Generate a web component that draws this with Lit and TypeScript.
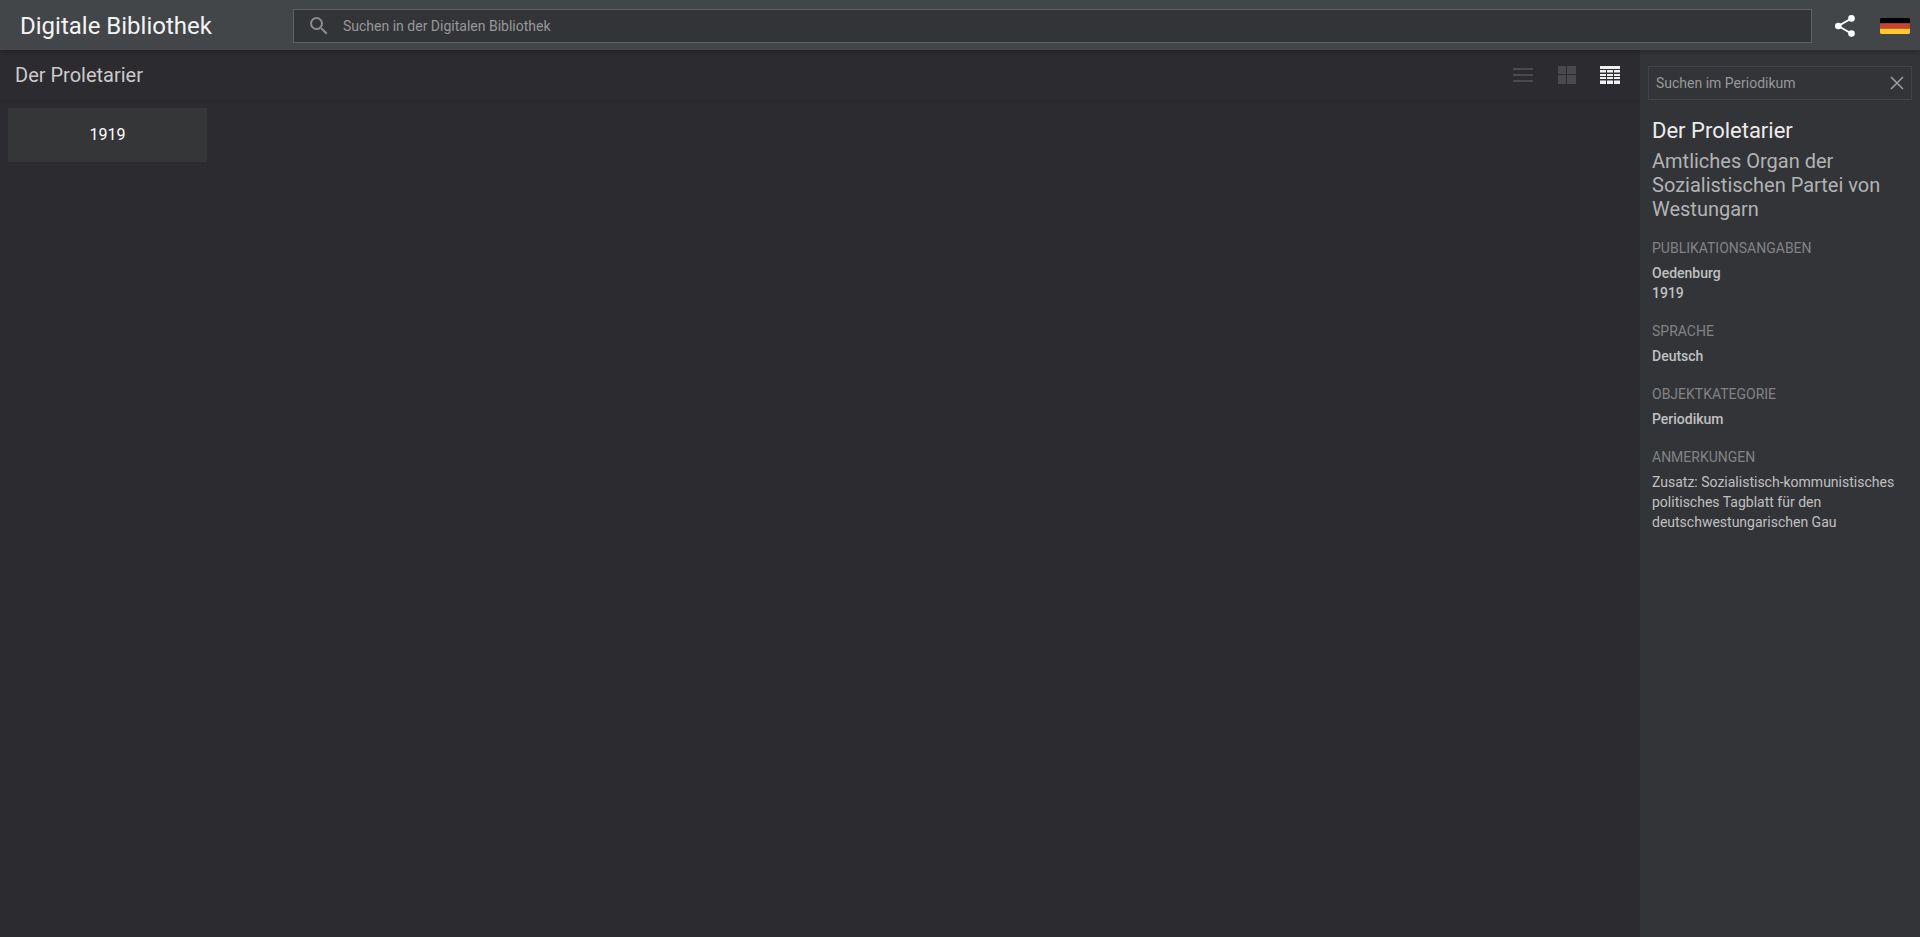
import { LitElement, html, css, svg } from "lit";
import { customElement, state } from "lit/decorators.js";

type View = "list" | "tiles" | "calendar";

interface Section {
  label: string;
  lines: string[];
  strong: boolean;
}

const SECTIONS: Section[] = [
  { label: "Publikationsangaben", lines: ["Oedenburg", "1919"], strong: true },
  { label: "Sprache", lines: ["Deutsch"], strong: true },
  { label: "Objektkategorie", lines: ["Periodikum"], strong: true },
  {
    label: "Anmerkungen",
    lines: ["Zusatz: Sozialistisch-kommunistisches politisches Tagblatt für den deutschwestungarischen Gau"],
    strong: false,
  },
];

const VIEWS: { id: View; title: string; icon: unknown }[] = [
  {
    id: "list",
    title: "Liste",
    icon: svg`<path d="M3 5h20v2H3zM3 11h20v2H3zM3 17h20v2H3z" />`,
  },
  {
    id: "tiles",
    title: "Kacheln",
    icon: svg`<path d="M4 3h8v8H4zM13 3h9v8h-9zM4 12h8v9H4zM13 12h9v9h-9z" />`,
  },
  {
    id: "calendar",
    title: "Kalender",
    icon: svg`<path d="M2 3h20v3H2z" />
      <path d="M2 7h6v2H2zM9 7h6v2H9zM16 7h6v2h-6zM2 11h6v2H2zM9 11h6v2H9zM16 11h6v2h-6zM2 14h6v2H2zM9 14h6v2H9zM16 14h6v2h-6zM2 18h6v3H2zM9 18h6v3H9zM16 18h6v3h-6z" />
      <path opacity=".55" d="M2 9h6v1H2zM9 9h6v1H9zM16 9h6v1h-6zM2 17h6v1H2zM9 17h6v1H9zM16 17h6v1h-6z" />`,
  },
];

@customElement("app-root")
export class AppRoot extends LitElement {
  @state() private view: View = "calendar";

  static styles = css`
    :host {
      display: flex;
      flex-direction: column;
      min-height: 100vh;
      background: #2c2b2f;
      color: #c0c0c1;
      font: 14px/20px Roboto, "Liberation Sans", sans-serif;
    }
    *,
    *::before {
      box-sizing: border-box;
    }
    h1,
    h2,
    h3,
    p {
      margin: 0;
      font-weight: 400;
    }
    a {
      color: inherit;
      text-decoration: none;
    }
    button {
      display: flex;
      align-items: center;
      justify-content: center;
      padding: 0;
      border: 0;
      background: none;
      color: inherit;
      font: inherit;
      cursor: pointer;
    }
    svg {
      display: block;
      fill: currentColor;
    }
    input {
      flex: 1;
      min-width: 0;
      height: 100%;
      padding: 0;
      border: 0;
      outline: 0;
      background: none;
      color: #e0e0e0;
      font: inherit;
    }
    input::placeholder {
      color: #97989a;
      opacity: 1;
    }
    .topbar {
      position: relative;
      z-index: 1;
      display: flex;
      align-items: center;
      height: 50px;
      padding: 2px 10px 0 20px;
      background: #434649;
      box-shadow: 0 1px 5px rgba(0, 0, 0, 0.3);
    }
    .brand {
      flex: 0 0 273px;
      color: #f4f4f4;
      font-size: 24px;
      line-height: 32px;
    }
    .field {
      display: flex;
      align-items: center;
      height: 34px;
      border: 1px solid #5f6163;
      background: #333438;
    }
    .field.global {
      flex: 1;
      gap: 12px;
      padding: 0 14px 0 13px;
    }
    .field.local {
      padding: 0 4px 0 7px;
      border-color: #42434a;
    }
    .magnifier {
      color: #8b8c8e;
    }
    .share {
      width: 24px;
      height: 34px;
      margin: 0 23px 0 21px;
      color: #fff;
    }
    .body {
      flex: 1;
      display: flex;
    }
    .main {
      flex: 1;
    }
    .toolbar {
      display: flex;
      align-items: center;
      justify-content: space-between;
      height: 50px;
      padding: 0 18px 0 15px;
      box-shadow: 0 1px 3px rgba(0, 0, 0, 0.15);
    }
    .heading {
      color: #cacaca;
      font-size: 20px;
      line-height: 24px;
    }
    .views {
      display: flex;
      gap: 20px;
    }
    .view {
      color: #4a4a4e;
    }
    .view.active {
      color: #f0f0f0;
    }
    .years {
      display: grid;
      grid-template-columns: repeat(auto-fill, 199px);
      gap: 8px;
      padding: 8px;
    }
    .year {
      display: flex;
      align-items: center;
      justify-content: center;
      height: 54px;
      background: #353638;
      color: #fff;
      font-size: 16px;
      line-height: 24px;
    }
    .side {
      flex: 0 0 280px;
      padding: 16px 8px;
      background: #333438;
    }
    .clear {
      width: 20px;
      height: 24px;
      color: #a0a0a2;
    }
    .info {
      padding: 17px 4px;
    }
    .title {
      color: #ececec;
      font-size: 22px;
      line-height: 28px;
    }
    .subtitle {
      margin-top: 4px;
      color: #b2b3b4;
      font-size: 20px;
      line-height: 24px;
    }
    .sections {
      display: grid;
      gap: 18px;
      margin-top: 17px;
    }
    .label {
      margin-bottom: 5px;
      color: #828385;
      font-size: 14px;
      text-transform: uppercase;
    }
    .value.strong {
      font-weight: 500;
    }
  `;

  render() {
    return html`
      <header class="topbar">
        <a class="brand" href="#">Digitale Bibliothek</a>
        <div class="field global" role="search">
          <svg class="magnifier" width="24" height="24" viewBox="0 0 24 24" aria-hidden="true">
            <path
              d="M15.5 14h-.79l-.28-.27A6.47 6.47 0 0 0 16 9.5 6.5 6.5 0 1 0 9.5 16c1.61 0 3.09-.59 4.23-1.57l.27.28v.79l5 4.99L20.49 19l-4.99-5zm-6 0C7.01 14 5 11.99 5 9.5S7.01 5 9.5 5 14 7.01 14 9.5 11.99 14 9.5 14z"
            />
          </svg>
          <input type="text" aria-label="Suchen in der Digitalen Bibliothek" placeholder="Suchen in der Digitalen Bibliothek" />
        </div>
        <button class="share" type="button" aria-label="Teilen">
          <svg width="24" height="24" viewBox="0 0 24 24" aria-hidden="true">
            <path d="M5.3 12 18.3 4.5M5.3 12l13 7.5" fill="none" stroke="currentColor" stroke-width="2" />
            <circle cx="5.3" cy="12" r="3.3" />
            <circle cx="18.5" cy="4.4" r="3.3" />
            <circle cx="18.5" cy="19.6" r="3.3" />
          </svg>
        </button>
        <button class="language" type="button" aria-label="Sprache: Deutsch">
          <svg width="30" height="16" viewBox="0 0 30 16" aria-hidden="true">
            <path fill="#000" d="M1 0h28l1 1v4.3H0V1z" />
            <path fill="#c9432f" d="M0 5.3h30v5.4H0z" />
            <path fill="#fdc92f" d="M0 10.7h30V15l-1 1H1l-1-1z" />
          </svg>
        </button>
      </header>
      <div class="body">
        <main class="main">
          <div class="toolbar">
            <h1 class="heading">Der Proletarier</h1>
            <div class="views">
              ${VIEWS.map(
                (v) => html`<button
                  class="view ${v.id === this.view ? "active" : ""}"
                  type="button"
                  aria-label=${v.title}
                  aria-pressed=${v.id === this.view}
                  @click=${() => (this.view = v.id)}
                >
                  <svg width="24" height="24" viewBox="0 0 24 24" aria-hidden="true">${v.icon}</svg>
                </button>`,
              )}
            </div>
          </div>
          <div class="years"><a class="year" href="#1919">1919</a></div>
        </main>
        <aside class="side">
          <div class="field local">
            <input type="text" aria-label="Suchen im Periodikum" placeholder="Suchen im Periodikum" />
            <button class="clear" type="button" aria-label="Eingabe löschen">
              <svg width="20" height="20" viewBox="0 0 20 20" aria-hidden="true">
                <path d="m4 4 12 12M16 4 4 16" fill="none" stroke="currentColor" stroke-width="1.5" />
              </svg>
            </button>
          </div>
          <div class="info">
            <h2 class="title">Der Proletarier</h2>
            <p class="subtitle">Amtliches Organ der Sozialistischen Partei von Westungarn</p>
            <div class="sections">
              ${SECTIONS.map(
                (s) => html`<section>
                  <h3 class="label">${s.label}</h3>
                  ${s.lines.map((line) => html`<p class="value ${s.strong ? "strong" : ""}">${line}</p>`)}
                </section>`,
              )}
            </div>
          </div>
        </aside>
      </div>
    `;
  }
}
